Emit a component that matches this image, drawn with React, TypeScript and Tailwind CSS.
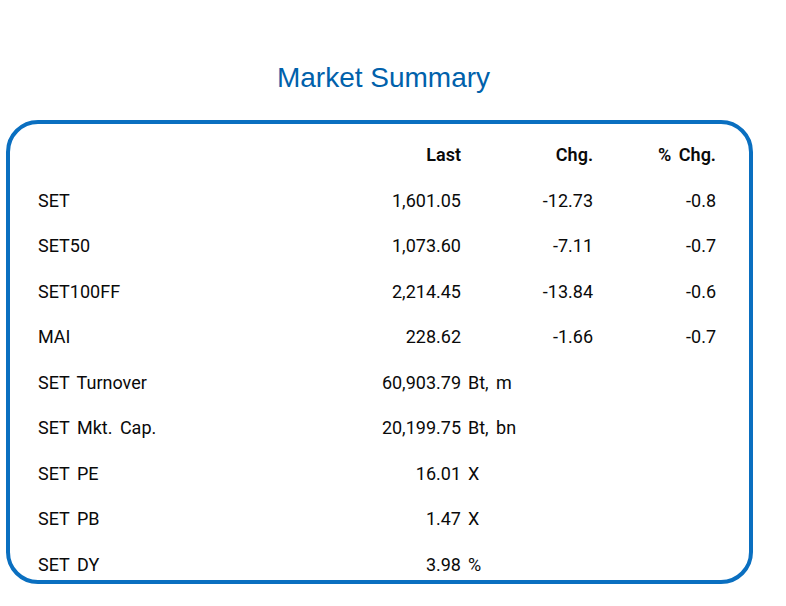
const ROWS = [
  { name: 'SET', last: '1,601.05', chg: '-12.73', pct: '-0.8' },
  { name: 'SET50', last: '1,073.60', chg: '-7.11', pct: '-0.7' },
  { name: 'SET100FF', last: '2,214.45', chg: '-13.84', pct: '-0.6' },
  { name: 'MAI', last: '228.62', chg: '-1.66', pct: '-0.7' },
  { name: 'SET Turnover', last: '60,903.79', unit: 'Bt, m' },
  { name: 'SET Mkt. Cap.', last: '20,199.75', unit: 'Bt, bn' },
  { name: 'SET PE', last: '16.01', unit: 'X' },
  { name: 'SET PB', last: '1.47', unit: 'X' },
  { name: 'SET DY', last: '3.98', unit: '%' },
];

export default function App() {
  return (
    <div className="h-[606px] w-[786px] bg-white" style={{ fontFamily: 'Roboto, "Liberation Sans", sans-serif' }}>
      <div className="ml-[6px] w-[747px] pl-[8px] pt-[62px] text-center">
        <h1 className="text-[28px] leading-[32px] text-[#0061ab]" style={{ fontFamily: '"Liberation Sans", Arial, sans-serif' }}>
          Market Summary
        </h1>
      </div>

      <div className="ml-[6px] mt-[26px] h-[464px] w-[747px] rounded-[32px] border-4 border-[#0a6fc0] pt-[8px] text-[18px] text-[#0a0a0a]">
        {/* header */}
        <div className="flex h-[45.5px] items-center font-semibold">
          <span className="w-[351px]" />
          <span className="w-[100px] text-right">Last</span>
          <span className="w-[132px] text-right">Chg.</span>
          <span className="w-[123px] text-right [word-spacing:3px]">% Chg.</span>
        </div>

        {ROWS.map((r) => (
          <div key={r.name} className="flex h-[45.5px] items-center">
            <span className="w-[351px] pl-[28px] [word-spacing:3px]">{r.name}</span>
            <span className="w-[100px] text-right">{r.last}</span>
            {r.unit ? (
              <span className="pl-[7px] [word-spacing:3px]">{r.unit}</span>
            ) : (
              <>
                <span className="w-[132px] text-right">{r.chg}</span>
                <span className="w-[123px] text-right">{r.pct}</span>
              </>
            )}
          </div>
        ))}
      </div>
    </div>
  );
}
